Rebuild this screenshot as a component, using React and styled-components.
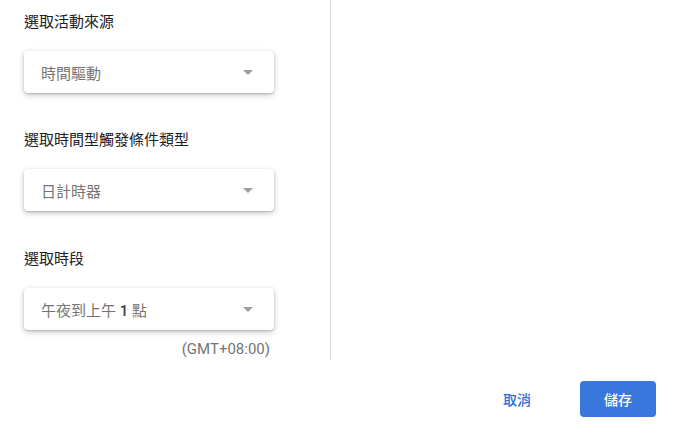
import React from 'react'
import styled, { createGlobalStyle } from 'styled-components'

const GlobalStyle = createGlobalStyle`
  html, body {
    margin: 0;
    padding: 0;
    background: #ffffff;
  }
  body {
    font-family: Roboto, "Noto Sans CJK TC", "Noto Sans", sans-serif;
  }
`

const Page = styled.div`
  width: 677px;
  height: 434px;
  display: flex;
  flex-direction: column;
  overflow: hidden;
`

const Body = styled.div`
  display: flex;
  height: 360px;
`

const LeftPanel = styled.div`
  width: 331px;
  box-sizing: border-box;
  border-right: 1px solid #dadce0;
  padding: 12px 0 0 24px;
  display: flex;
  flex-direction: column;
`

const Section = styled.div`
  display: flex;
  flex-direction: column;
  width: 250px;
  margin-bottom: ${props => props.$gap}px;
`

const Label = styled.div`
  font-size: 15px;
  line-height: 20px;
  color: #202124;
  margin-bottom: 19px;
`

const Select = styled.div`
  height: 42px;
  box-sizing: border-box;
  border-radius: 4px;
  background: #fff;
  box-shadow: 0 1px 2px rgba(0, 0, 0, 0.18), 0 2px 6px rgba(0, 0, 0, 0.22);
  display: flex;
  align-items: center;
  justify-content: space-between;
  padding: 0 21px 0 17px;
`

const SelectText = styled.span`
  font-size: 15px;
  color: #757575;
`

const Num = styled.span`
  color: #3c4043;
  font-weight: 500;
`

const Arrow = styled.span`
  width: 0;
  height: 0;
  border-left: 5px solid transparent;
  border-right: 5px solid transparent;
  border-top: 5px solid #9e9e9e;
`

const Note = styled.div`
  align-self: flex-end;
  margin-top: 10px;
  margin-right: 4px;
  font-size: 15px;
  line-height: 18px;
  color: #757575;
`

const Footer = styled.div`
  display: flex;
  justify-content: flex-end;
  align-items: center;
  padding: 21px 21px 0 0;
  gap: 25px;
`

const Button = styled.button`
  height: 36px;
  padding: 0 24px;
  border: none;
  border-radius: 4px;
  font-family: inherit;
  font-size: 14px;
  font-weight: 500;
  cursor: pointer;
  background: ${props => props.$primary ? '#3a77dc' : 'transparent'};
  color: ${props => props.$primary ? '#ffffff' : '#2f6fd6'};
`

const fields = [
  { label: '選取活動來源', value: '時間驅動', gap: 37 },
  { label: '選取時間型觸發條件類型', value: '日計時器', gap: 38 },
]

const App = () => {
  return (
    <Page>
      <GlobalStyle />
      <Body>
        <LeftPanel>
          {fields.map(f => (
            <Section key={f.label} $gap={f.gap}>
              <Label>{f.label}</Label>
              <Select>
                <SelectText>{f.value}</SelectText>
                <Arrow />
              </Select>
            </Section>
          ))}
          <Section $gap={0}>
            <Label>選取時段</Label>
            <Select>
              <SelectText>午夜到上午 <Num>1</Num> 點</SelectText>
              <Arrow />
            </Select>
            <Note>(GMT+08:00)</Note>
          </Section>
        </LeftPanel>
      </Body>
      <Footer>
        <Button>取消</Button>
        <Button $primary>儲存</Button>
      </Footer>
    </Page>
  )
}

export default App
